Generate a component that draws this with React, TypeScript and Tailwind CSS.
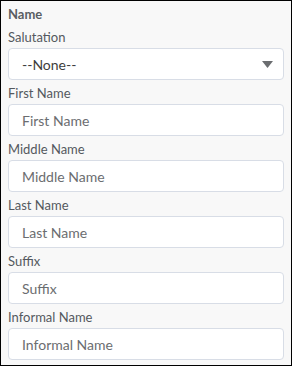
const fields = ['First Name', 'Middle Name', 'Last Name', 'Suffix', 'Informal Name'];

export default function App() {
  return (
    <div className="w-[292px] h-[366px] border border-black bg-[#f8f8f8] px-[7px] pt-[4px] font-['Lato','Liberation_Sans',sans-serif] text-[#54585e]">
      <div className="text-[13px] font-bold leading-[18px] text-[#5a5e63]">Name</div>
      <div className="mt-[5px] text-[13px] leading-[18px]">Salutation</div>
      <div className="mt-[2px] h-[32px] flex items-center justify-between rounded-[4px] border border-[#d8dde6] bg-white pl-[13px] pr-[10px] text-[14px] text-[#3e3e3c]">
        <span>--None--</span>
        <svg width="11" height="7" viewBox="0 0 11 7">
          <path d="M0 0h11L5.5 7z" fill="#6b6d70" />
        </svg>
      </div>
      {fields.map((f) => (
        <div key={f}>
          <div className="mt-[4px] text-[13px] leading-[18px]">{f}</div>
          <div className="mt-[2px] h-[32px] flex items-center rounded-[4px] border border-[#d8dde6] bg-white pl-[13px] text-[14px] text-[#6b6d70]">
            {f}
          </div>
        </div>
      ))}
    </div>
  );
}
